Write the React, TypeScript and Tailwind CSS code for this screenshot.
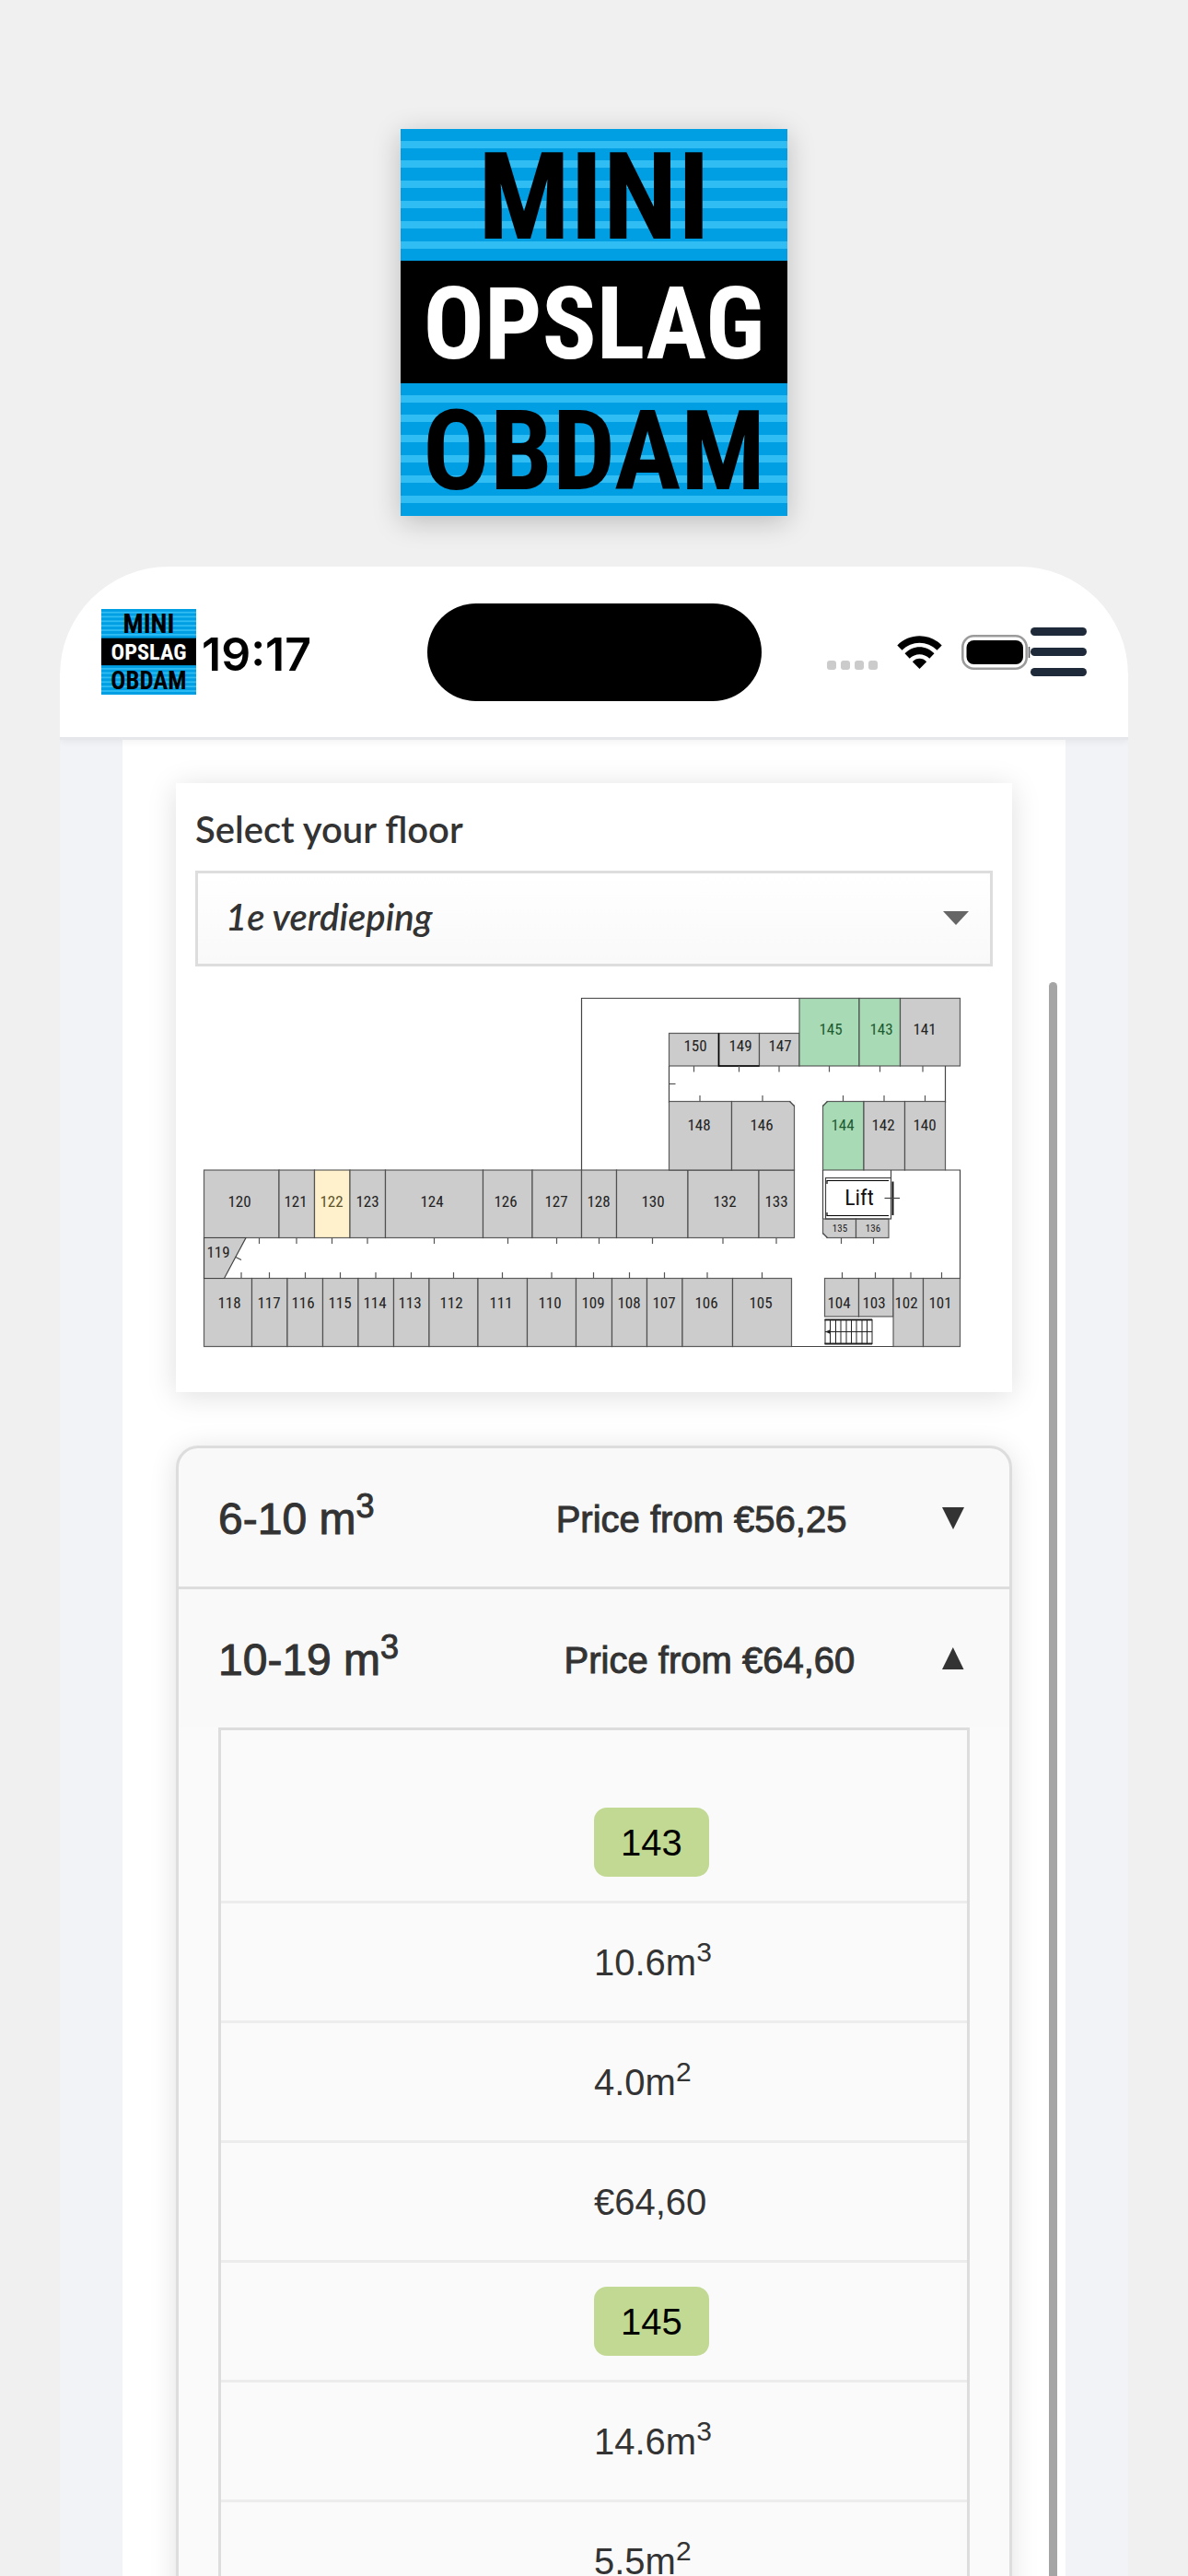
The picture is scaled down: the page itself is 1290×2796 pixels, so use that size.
import { useState } from "react";

interface LogoProps {
  width: number;
  height: number;
}

const STRIPES = [13, 34, 56, 78, 100, 122, 289, 310, 332, 354, 376, 398];

function Logo({ width, height }: LogoProps) {
  // everything is laid out on a 420 grid, the small version is a bit flatter
  const x = (n: number) => (n * width) / 420;
  const y = (n: number) => (n * height) / 420;

  return (
    <svg
      width={width}
      height={height}
      viewBox={`0 0 ${width} ${height}`}
      role="img"
      aria-label="Mini Opslag Obdam"
      className="shrink-0 overflow-visible font-['Roboto_Condensed','Roboto',sans-serif] font-bold"
      textAnchor="middle"
    >
      <rect width={width} height={height} fill="#009fe3" />
      {STRIPES.map((s) => (
        <rect key={s} y={y(s)} width={width} height={y(8)} fill="#30bdf3" />
      ))}
      <rect y={y(143)} width={width} height={y(133)} fill="#000" />
      <text x={x(210)} y={y(119)} fontSize={y(132)}>MINI</text>
      <text x={x(210)} y={y(249)} fontSize={y(110)} fill="#fff">OPSLAG</text>
      <text x={x(210)} y={y(391)} fontSize={y(121)}>OBDAM</text>
    </svg>
  );
}

type UnitState = "taken" | "free" | "option";

interface Unit {
  id: string;
  x1: number;
  x2: number;
  y1: number;
  y2: number;
  tx: number;
  ty: number;
  state?: UnitState;
  small?: boolean;
}

const row = (
  y1: number,
  y2: number,
  ty: number,
  edges: number[],
  labels: [string, number, UnitState?][],
): Unit[] =>
  labels.map(([id, tx, state], i) => ({
    id, tx, ty, state, y1, y2, x1: edges[i], x2: edges[i + 1],
  }));

const UNITS: Unit[] = [
  ...row(221, 294.5, 261, [9.5, 91, 129.5, 168, 206.5, 312.5, 366, 419.5, 457.5, 535, 612, 650.5], [
    ["120", 48], ["121", 109], ["122", 148, "option"], ["123", 187], ["124", 257], ["126", 337],
    ["127", 392], ["128", 438], ["130", 497], ["132", 575], ["133", 631],
  ]),
  ...row(338.5, 412.5, 371, [9.5, 61.5, 100, 138.5, 177, 215.5, 254, 307, 360.5, 413.5, 452.5, 490.5, 529, 583.5, 647.5], [
    ["118", 37], ["117", 80], ["116", 117], ["115", 157], ["114", 195], ["113", 233], ["112", 278],
    ["111", 332], ["110", 385], ["109", 432], ["108", 471], ["107", 509], ["106", 555], ["105", 614],
  ]),
  ...row(338.5, 380, 371, [683.5, 720.5, 758], [["104", 699], ["103", 737]]),
  ...row(338.5, 412.5, 371, [758, 790.5, 830.5], [["102", 772], ["101", 809]]),
  ...row(72.5, 108, 92, [514.5, 568.5, 612.5, 656], [["150", 543], ["149", 592], ["147", 635]]),
  ...row(34.5, 108, 74, [656, 721, 765.5, 830.5], [["145", 690, "free"], ["143", 745, "free"], ["141", 792]]),
  ...row(146.5, 221, 178, [514.5, 582.5, 650.5], [["148", 547], ["146", 615]]),
  ...row(146.5, 221, 178, [681.5, 726, 770.5, 814.5], [["144", 703, "free"], ["142", 747], ["140", 792]]),
  ...row(274, 294.5, 288, [681.5, 717.5, 753], [["135", 700], ["136", 736]]).map((u) => ({ ...u, small: true })),
];

const FILLS: Record<UnitState, string> = {
  taken: "#cccccc",
  free: "#a8dab5",
  option: "#fef1cc",
};

const LABELS: Record<UnitState, string> = {
  taken: "#222222",
  free: "#1d5a30",
  option: "#5e5228",
};

// door ticks: [top of the tick, x positions]
const DOORS: [number, number[]][] = [
  [294.5, [69.5, 110, 148.5, 187, 259.5, 339.5, 392.5, 438.5, 496.5, 573, 631, 701.5, 736.5]],
  [332, [50, 80.5, 119.5, 157.5, 196, 234.5, 280.5, 333.5, 387, 432.5, 471.5, 509.5, 556, 615.5, 702.5, 738.5, 777, 810.5]],
  [108, [541.5, 590.5, 634, 688.5, 743.5, 790]],
  [140, [548, 616, 703.5, 748, 792.5]],
];

function FloorPlan() {
  return (
    <svg
      viewBox="0 0 866 441"
      className="block w-full font-['Roboto_Condensed','Noto_Sans',sans-serif]"
      role="img"
      aria-label="Floor plan"
    >
      <g fill="none" stroke="#444" strokeWidth="1.2">
        <path d="M419.500 221V34.500H656M514.500 108v40M514.500 127.500h7M814.500 108v40M814.500 221h16v118M647 412.500h112" />
        <path d="M681.500 221v53M755.500 221v8" />
      </g>
      {UNITS.map((u) => {
        const state = u.state ?? "taken";
        return (
          <g key={u.id}>
            <rect
              x={u.x1}
              y={u.y1}
              width={u.x2 - u.x1}
              height={u.y2 - u.y1}
              fill={FILLS[state]}
              stroke="#444"
              strokeOpacity="0.85"
              strokeWidth="1.2"
            />
            <text
              x={u.tx}
              y={u.ty}
              textAnchor="middle"
              fontSize={u.small ? 11 : 17}
              fill={LABELS[state]}
            >
              {u.id}
            </text>
          </g>
        );
      })}

      {/* cut corners */}
      <g fill="#fff">
        <path d="M645.500 145.500h6v6zM686.500 145.500h-6v6zM686.500 295.500h-6v-6z" />
        <path d="M645.500 146.500l5 5M686.500 146.500l-5 5M686.500 294.500l-5-5" stroke="#444" strokeWidth="1.2" />
      </g>

      <path d="M568.500 72.500V108H612.500" fill="none" stroke="#000" strokeWidth="1.6" />

      <path d="M9.500 294.500H55L31.500 338.500H9.500z" fill="#ccc" stroke="#444" strokeWidth="1.2" />
      <path d="M44 315.500l6 3" stroke="#444" strokeWidth="1.2" />
      <text x="25" y="316" textAnchor="middle" fontSize="17" fill="#222">119</text>

      <g stroke="#555" strokeWidth="1.2">
        {DOORS.map(([top, xs]) =>
          xs.map((x) => <line key={`${top}-${x}`} x1={x} x2={x} y1={top} y2={top + 6.5} />),
        )}
      </g>

      {/* lift */}
      <g fill="none" stroke="#444">
        <rect x="684.500" y="229.500" width="71" height="44.500" strokeWidth="1.2" />
        <path d="M686 236v-3.500H753M686 267v3.500H753" stroke="#000" strokeWidth="1.2" />
        <path d="M757.500 233.500V270" stroke="#000" strokeWidth="1.8" />
        <path d="M748.500 251.500H765" strokeWidth="1.2" />
      </g>
      <text x="721" y="259" textAnchor="middle" fontSize="24" fill="#111">Lift</text>

      {/* stairs */}
      <g fill="none" stroke="#222">
        <path d="M683.500 383.500H735M683.500 409.500H735" strokeWidth="1.8" />
        <path
          d="M684 383v27M689.500 383v27M695.500 383v27M701 383v27M707 383v27M712.500 383v27M718 383v27M724 383v27M729.500 383v27M735 383v27"
          strokeWidth="1"
        />
        <path d="M684 396.500H735" strokeWidth="1.2" />
        <path d="M684 396.500l6-2.500v5z" fill="#222" stroke="none" />
      </g>
    </svg>
  );
}

function StatusIcons() {
  return (
    <div className="flex items-center">
      <div className="mr-[21px] flex gap-[5px] pt-[29px]">
        {[0, 1, 2, 3].map((i) => (
          <span key={i} className="size-[10px] rounded-[3px] bg-[#cbcbcb]" />
        ))}
      </div>
      <svg width="49" height="36" viewBox="0 0 49 36" className="mr-[21px]" aria-hidden="true">
        <path d="M0.300 10.500C13.500-3.200 35.500-3.200 48.700 10.500L43.500 15.800C33 5 16 5 5.500 15.800z" />
        <path d="M8.500 19.300C17.500 9.900 31.500 9.900 40.500 19.300L35.300 24.700C29.200 18.600 19.800 18.600 13.700 24.700z" />
        <path d="M16.800 28.300C21.200 23.700 27.800 23.700 32.200 28.300L24.500 36z" />
      </svg>
      <svg width="75" height="38" viewBox="0 0 75 38" aria-hidden="true">
        <rect x="1.300" y="1.300" width="69.400" height="35.400" rx="12" fill="none" stroke="#9b9b9b" strokeWidth="2.600" />
        <rect x="5.500" y="6" width="61.500" height="26" rx="8" />
        <path d="M73.500 13v12" stroke="#555" strokeWidth="1.500" />
      </svg>
    </div>
  );
}

function Arrow({ open }: { open: boolean }) {
  return (
    <svg width="35" height="25" viewBox="0 0 35 25" className="inline-block" fill="#333" aria-hidden="true">
      {open ? <path d="M5 24L16.800 0L28.500 24z" /> : <path d="M5 1H29L17 25z" />}
    </svg>
  );
}

interface PriceGroup {
  label: string;
  price: string;
  units: { id: string; volume: string; area: string; price?: string }[];
}

const GROUPS: PriceGroup[] = [
  { label: "6-10 m", price: "€56,25", units: [] },
  {
    label: "10-19 m",
    price: "€64,60",
    units: [
      { id: "143", volume: "10.6", area: "4.0", price: "€64,60" },
      { id: "145", volume: "14.6", area: "5.5" },
    ],
  },
];

const ROW = "block border-b-[3px] border-[#ececec] last:border-0";
const CELL = "flex h-[127px] items-center pl-[50%]";

export default function App() {
  const [floor, setFloor] = useState("1");
  const [open, setOpen] = useState(1);

  return (
    <div className="flex h-screen flex-col items-center overflow-hidden bg-[#f0f0f0] px-[65px] pt-[140px] font-['Liberation_Sans',Arial,sans-serif] text-[#333]">
      <div className="mb-[55px] h-[420px] shrink-0 shadow-[0_6px_28px_rgba(0,0,0,0.22)]">
        <Logo width={420} height={420} />
      </div>

      <div className="flex min-h-0 w-full flex-1 flex-col overflow-hidden rounded-t-[118px] bg-[#f1f3f6]">
        <header className="z-10 grid h-[188px] shrink-0 grid-cols-[1fr_auto_1fr] items-center border-b-[3px] border-[#e5e7eb] bg-white px-[45px] shadow-[0_2px_8px_rgba(0,0,0,0.06)]">
          <div className="flex items-center gap-[6px]">
            <Logo width={103} height={93} />
            <span className="pt-1 font-['Inter',sans-serif] text-[50px] leading-none font-semibold text-black">19:17</span>
          </div>
          <div className="h-[106px] w-[363px] rounded-full bg-black" />
          <div className="flex items-center justify-end">
            <StatusIcons />
            <button type="button" aria-label="Menu" className="flex w-[61px] flex-col gap-[13px]">
              <span className="h-[9px] rounded-full bg-gray-800" />
              <span className="h-[9px] rounded-full bg-gray-800" />
              <span className="h-[9px] rounded-full bg-gray-800" />
            </button>
          </div>
        </header>

        <main className="relative mx-[68px] min-h-0 flex-1 bg-white px-[58px] pt-[47px]">
          <section className="bg-white px-[21px] pb-[21px] shadow-[0_4px_30px_rgba(0,0,0,0.13)]">
            <label
              htmlFor="floor"
              className="flex h-[95px] items-center pt-1 font-['Lato',sans-serif] text-[40px] font-semibold"
            >
              Select your floor
            </label>
            <div className="relative">
              <select
                id="floor"
                value={floor}
                onChange={(e) => setFloor(e.target.value)}
                className="block h-[104px] w-full appearance-none border-[3px] border-[#ddd] bg-linear-to-b from-white to-[#f9f9f9] pr-20 pb-1 pl-[30px] font-['Lato',sans-serif] text-[40px] font-semibold italic outline-none"
              >
                <option value="0">Begane grond</option>
                <option value="1">1e verdieping</option>
              </select>
              <svg
                viewBox="0 0 28 15"
                className="pointer-events-none absolute top-[44px] right-[26px] w-[28px]"
                fill="#666"
                aria-hidden="true"
              >
                <path d="M0 0H28L14 15z" />
              </svg>
            </div>
            <FloorPlan />
          </section>

          <section className="mt-[58px] overflow-hidden rounded-[24px] border-[3px] border-[#ddd] bg-[#f9f9f9] shadow-[0_4px_30px_rgba(0,0,0,0.12)]">
            {GROUPS.map((group, i) => (
              <div key={group.label} className="border-b-[3px] border-[#ddd] last:border-0">
                <button
                  type="button"
                  aria-expanded={open === i}
                  onClick={() => setOpen(open === i ? -1 : i)}
                  className="flex h-[150px] w-full items-center px-[43px]"
                >
                  <span className="grow pt-1 text-left text-[48px] [-webkit-text-stroke:1px]">
                    {group.label}
                    <sup>3</sup>
                  </span>
                  <span className="grow pt-1 text-right text-[40px] [-webkit-text-stroke:1px]">Price from {group.price}</span>
                  <span className="flex grow justify-end">
                    <Arrow open={open === i} />
                  </span>
                </button>

                {open === i && (
                  <div className="bg-[#fafafa] px-[43px]">
                    <table className="block border-[3px] border-[#ddd] pt-[58px] text-[40px]">
                      <tbody className="block">
                        {group.units.map((unit) => [
                          <tr key={unit.id} className={ROW}>
                            <td className={CELL}>
                              <button
                                type="button"
                                className="flex h-[75px] items-center rounded-[14px] bg-[#c1d992] px-[29px] text-black"
                              >
                                {unit.id}
                              </button>
                            </td>
                          </tr>,
                          <tr key={`${unit.id}-volume`} className={ROW}>
                            <td className={CELL}>
                              <span>{unit.volume}m<sup>3</sup></span>
                            </td>
                          </tr>,
                          <tr key={`${unit.id}-area`} className={ROW}>
                            <td className={CELL}>
                              <span>{unit.area}m<sup>2</sup></span>
                            </td>
                          </tr>,
                          unit.price && (
                            <tr key={`${unit.id}-price`} className={ROW}>
                              <td className={CELL}>{unit.price}</td>
                            </tr>
                          ),
                        ])}
                      </tbody>
                    </table>
                  </div>
                )}
              </div>
            ))}
          </section>

          {/* scroll thumb */}
          <div className="absolute top-[263px] right-[9px] bottom-0 w-[9px] rounded-t-full bg-[#a5a5a5]" />
        </main>
      </div>
    </div>
  );
}
